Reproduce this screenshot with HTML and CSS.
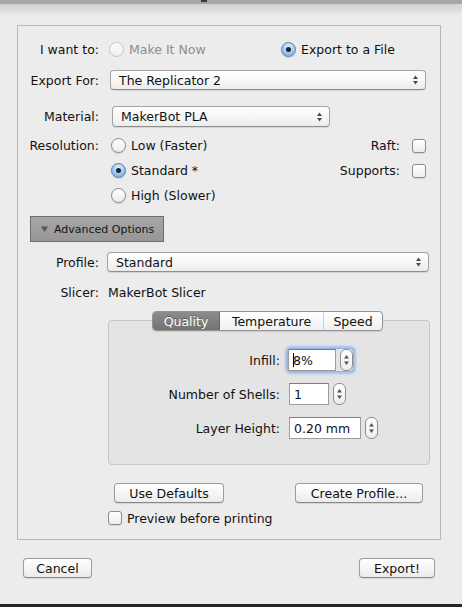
FILE: index.html
```html
<!DOCTYPE html>
<html>
<head>
<meta charset="utf-8">
<link rel="stylesheet" href="styles.css">
</head>
<body>
<div class="titlebar"><span class="mark"></span></div>
<div class="shade"></div>
<div class="group">
  <div class="row r-want">
    <span class="lbl">I want to:</span>
    <span class="opt opt-first disabled"><span class="radio"></span>Make It Now</span>
    <span class="opt"><span class="radio on"></span>Export to a File</span>
  </div>
  <div class="row r-export">
    <span class="lbl">Export For:</span>
    <div class="select sel-export"><span>The Replicator 2</span><svg class="arrows" width="5" height="10" viewBox="0 0 5 10"><path d="M2.5 0.5 L5 4 L0 4Z M2.5 9.5 L0 6 L5 6Z" fill="#4a4a4a"/></svg></div>
  </div>
  <div class="row r-material">
    <span class="lbl">Material:</span>
    <div class="select sel-material"><span>MakerBot PLA</span><svg class="arrows" width="5" height="10" viewBox="0 0 5 10"><path d="M2.5 0.5 L5 4 L0 4Z M2.5 9.5 L0 6 L5 6Z" fill="#4a4a4a"/></svg></div>
  </div>
  <div class="row r-res r-res-first">
    <span class="lbl">Resolution:</span>
    <span class="opt opt-res"><span class="radio"></span>Low (Faster)</span>
    <span class="side"><span>Raft:</span><span class="check"></span></span>
  </div>
  <div class="row r-res">
    <span class="lbl"></span>
    <span class="opt opt-res"><span class="radio on"></span>Standard *</span>
    <span class="side"><span>Supports:</span><span class="check"></span></span>
  </div>
  <div class="row r-res">
    <span class="lbl"></span>
    <span class="opt opt-res"><span class="radio"></span>High (Slower)</span>
  </div>
  <div class="row r-adv">
    <div class="adv"><svg class="tri" width="7" height="6" viewBox="0 0 7 6"><path d="M0 0.5 L7 0.5 L3.5 6Z" fill="#555"/></svg><span>Advanced Options</span></div>
  </div>
  <div class="row r-profile">
    <span class="lbl">Profile:</span>
    <div class="select sel-profile"><span>Standard</span><svg class="arrows" width="5" height="10" viewBox="0 0 5 10"><path d="M2.5 0.5 L5 4 L0 4Z M2.5 9.5 L0 6 L5 6Z" fill="#4a4a4a"/></svg></div>
  </div>
  <div class="row r-slicer">
    <span class="lbl">Slicer:</span>
    <span class="slicer-val">MakerBot Slicer</span>
  </div>
  <div class="tabs-wrap">
    <div class="tabs">
      <span class="tab tab-q sel">Quality</span>
      <span class="tab tab-t">Temperature</span>
      <span class="tab tab-s">Speed</span>
    </div>
    <div class="tabbox">
      <div class="frow">
        <span class="flbl">Infill:</span>
        <span class="focus">
          <span class="field f-infill"><span class="caret"></span>8%</span>
          <span class="stepper"><svg width="5" height="12" viewBox="0 0 5 12"><path d="M2.5 1 L5 4.5 L0 4.5Z M2.5 11 L0 7.5 L5 7.5Z" fill="#555"/></svg></span>
        </span>
      </div>
      <div class="frow">
        <span class="flbl">Number of Shells:</span>
        <span class="field f-shells">1</span>
        <span class="stepper"><svg width="5" height="12" viewBox="0 0 5 12"><path d="M2.5 1 L5 4.5 L0 4.5Z M2.5 11 L0 7.5 L5 7.5Z" fill="#555"/></svg></span>
      </div>
      <div class="frow">
        <span class="flbl">Layer Height:</span>
        <span class="field f-layer">0.20 mm</span>
        <span class="stepper"><svg width="5" height="12" viewBox="0 0 5 12"><path d="M2.5 1 L5 4.5 L0 4.5Z M2.5 11 L0 7.5 L5 7.5Z" fill="#555"/></svg></span>
      </div>
    </div>
  </div>
  <div class="row r-buttons">
    <span class="btn b-defaults">Use Defaults</span>
    <span class="btn b-create">Create Profile...</span>
  </div>
  <div class="row r-preview">
    <span class="check"></span><span class="prev-text">Preview before printing</span>
  </div>
</div>
<div class="footer">
  <span class="btn b-cancel">Cancel</span>
  <span class="btn b-export">Export!</span>
</div>
<div class="edge"></div>
</body>
</html>
```
FILE: styles.css
```css
html, body {
  margin: 0;
  padding: 0;
}
body {
  width: 462px;
  height: 607px;
  overflow: hidden;
  background: #ececec;
  font-family: "DejaVu Sans", "Liberation Sans", sans-serif;
  font-size: 12.5px;
  color: #111111;
  display: flex;
  flex-direction: column;
}
.titlebar {
  height: 4px;
  flex: none;
  background: #a6a6a6;
}
.mark {
  display: block;
  width: 6px;
  height: 2px;
  margin-left: 201px;
  background: #3a3a3a;
}
.shade {
  height: 12px;
  flex: none;
  background: linear-gradient(#d0d0d0, #ececec);
}
.group {
  flex: none;
  margin: 9px 21px 0 17px;
  height: 515px;
  box-sizing: border-box;
  border: 1px solid #b8b8b8;
  display: flex;
  flex-direction: column;
}
.row {
  display: flex;
  align-items: center;
  flex: none;
}
.lbl {
  width: 81px;
  flex: none;
  text-align: right;
}
.opt {
  display: flex;
  align-items: center;
  gap: 5px;
}
.opt-first {
  margin-left: 10px;
  width: 172px;
}
.disabled {
  color: #8c8c8c;
}
.radio {
  width: 15px;
  height: 15px;
  box-sizing: border-box;
  border-radius: 50%;
  border: 1px solid #8a8a8a;
  background: linear-gradient(#ffffff, #ececec);
  box-shadow: 0 1px 1px rgba(0,0,0,0.12);
  display: flex;
  align-items: center;
  justify-content: center;
  flex: none;
}
.disabled .radio {
  border-color: #c4c4c4;
  background: linear-gradient(#fbfbfb, #f0f0f0);
  box-shadow: none;
}
.radio.on {
  border-color: #5a7fb0;
  background: radial-gradient(circle at 50% 30%, #e3f0fd 0%, #a9cdf4 45%, #6aa5e6 100%);
}
.radio.on::after {
  content: "";
  width: 5px;
  height: 5px;
  border-radius: 50%;
  background: #1b2433;
}
.r-want {
  height: 20px;
  margin-top: 13px;
}
.r-export {
  height: 20px;
  margin-top: 11px;
}
.select {
  height: 100%;
  box-sizing: border-box;
  border: 1px solid #a3a3a3;
  border-bottom-color: #8e8e8e;
  border-radius: 4px;
  background: linear-gradient(#ffffff, #f7f7f7 50%, #ececec);
  box-shadow: 0 1px 1px rgba(0,0,0,0.1);
  display: flex;
  align-items: center;
  padding: 0 7px 0 8px;
}
.select span {
  flex: 1;
}
.sel-export {
  margin-left: 11px;
  width: 316px;
}
.r-material {
  height: 21px;
  margin-top: 16px;
}
.sel-material {
  margin-left: 13px;
  width: 218px;
}
.r-res {
  height: 25px;
}
.r-res-first {
  margin-top: 6px;
}
.opt-res {
  margin-left: 12px;
}
.side {
  margin-left: auto;
  margin-right: 14px;
  display: flex;
  align-items: center;
  gap: 12px;
}
.check {
  width: 14px;
  height: 14px;
  box-sizing: border-box;
  border: 1px solid #8c8c8c;
  border-radius: 3px;
  background: linear-gradient(#ffffff, #ededed);
  box-shadow: 0 1px 1px rgba(0,0,0,0.1);
  flex: none;
}
.r-adv {
  margin-top: 8px;
}
.adv {
  margin-left: 12px;
  width: 134px;
  height: 26px;
  box-sizing: border-box;
  border: 1px solid #6d6d6d;
  background: linear-gradient(#a6a6a6, #979797);
  display: flex;
  align-items: center;
  font-size: 11px;
  color: #141414;
}
.tri {
  margin-left: 10px;
  margin-right: 6px;
}
.r-profile {
  height: 20px;
  margin-top: 10px;
}
.sel-profile {
  margin-left: 8px;
  width: 322px;
}
.r-slicer {
  height: 16px;
  margin-top: 12px;
}
.slicer-val {
  margin-left: 9px;
}
.tabs-wrap {
  flex: none;
  margin-top: 11px;
  margin-left: 90px;
  width: 322px;
}
.tabs {
  position: relative;
  z-index: 1;
  margin-left: 44px;
  display: flex;
  height: 20px;
  width: 231px;
  box-sizing: border-box;
  border: 1px solid #939393;
  border-radius: 4px;
  overflow: hidden;
  background: linear-gradient(#ffffff, #f0f0f0);
  box-shadow: 0 1px 1px rgba(0,0,0,0.1);
}
.tab {
  display: flex;
  align-items: center;
  justify-content: center;
  box-sizing: border-box;
}
.tab-q {
  width: 67px;
}
.tab-t {
  width: 104px;
  border-right: 1px solid #cfcfcf;
}
.tab-s {
  flex: 1;
}
.tab.sel {
  background: linear-gradient(#8c8c8c, #737373);
  color: #ffffff;
  text-shadow: 0 -1px 0 rgba(0,0,0,0.35);
  border-right: 1px solid #666;
}
.tabbox {
  margin-top: -11px;
  height: 145px;
  box-sizing: border-box;
  border: 1px solid #c6c6c6;
  border-radius: 4px;
  background: #e4e4e4;
  padding-top: 28px;
  display: flex;
  flex-direction: column;
  gap: 12px;
}
.frow {
  display: flex;
  align-items: center;
  height: 22px;
}
.flbl {
  width: 171px;
  flex: none;
  text-align: right;
  margin-right: 8px;
}
.focus {
  display: flex;
  align-items: center;
  height: 22px;
  gap: 4px;
  border-radius: 3px;
  box-shadow: 0 0 0 1px #8db5e8, 0 0 2px 3px rgba(120,165,230,0.55);
}
.field {
  height: 22px;
  box-sizing: border-box;
  border: 1px solid #9d9d9d;
  border-top-color: #7d7d7d;
  background: #ffffff;
  display: flex;
  align-items: center;
  padding-left: 4px;
  margin-right: 4px;
}
.focus .field {
  margin-right: 0;
}
.f-infill {
  width: 48px;
}
.f-shells {
  width: 40px;
  margin-left: 1px;
}
.f-layer {
  width: 72px;
  margin-left: 1px;
}
.caret {
  width: 1px;
  height: 14px;
  background: #000;
  margin-right: -1px;
}
.stepper {
  width: 13px;
  height: 22px;
  box-sizing: border-box;
  border: 1px solid #8e8e8e;
  border-radius: 6px;
  background: linear-gradient(#ffffff, #ededed);
  display: flex;
  align-items: center;
  justify-content: center;
}
.btn {
  height: 20px;
  box-sizing: border-box;
  border: 1px solid #9c9c9c;
  border-bottom-color: #888;
  border-radius: 4px;
  background: linear-gradient(#ffffff, #f6f6f6 50%, #ebebeb);
  box-shadow: 0 1px 1px rgba(0,0,0,0.1);
  display: flex;
  align-items: center;
  justify-content: center;
  flex: none;
}
.r-buttons {
  height: 20px;
  margin-top: 18px;
}
.b-defaults {
  margin-left: 96px;
  width: 110px;
}
.b-create {
  margin-left: 71px;
  width: 128px;
}
.r-preview {
  height: 14px;
  margin-top: 8px;
}
.r-preview .check {
  margin-left: 90px;
}
.prev-text {
  margin-left: 5px;
}
.footer {
  flex: none;
  display: flex;
  justify-content: space-between;
  margin: 18px 27px 0 23px;
  height: 20px;
}
.b-cancel {
  width: 69px;
}
.b-export {
  width: 76px;
}
.edge {
  flex: none;
  margin-top: auto;
  height: 3px;
  background: #262626;
}
```
